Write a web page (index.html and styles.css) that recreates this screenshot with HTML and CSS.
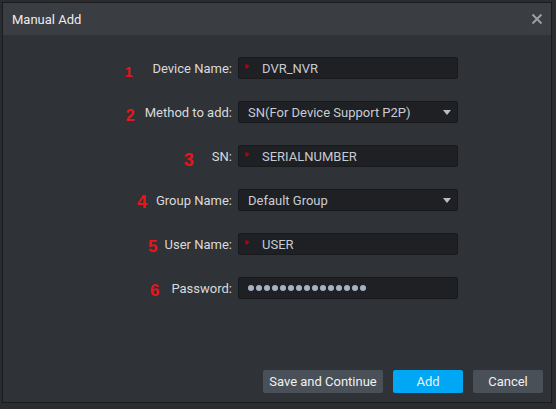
FILE: index.html
```html
<!DOCTYPE html>
<html>
<head>
<meta charset="utf-8">
<link rel="stylesheet" href="styles.css">
</head>
<body>
<div class="dialog">
  <div class="titlebar">
    <span class="title">Manual Add</span>
    <svg class="close" width="12" height="12" viewBox="0 0 12 12"><path d="M1.5 1.5L10.5 10.5M10.5 1.5L1.5 10.5" stroke="#9a9ea6" stroke-width="2"/></svg>
  </div>
  <div class="content">
    <div class="form">
      <div class="row">
        <div class="label"><span class="num n1">1</span><span>Device Name:</span></div>
        <div class="field"><span class="req">*</span><span class="val">DVR_NVR</span></div>
      </div>
      <div class="row">
        <div class="label"><span class="num n2">2</span><span>Method to add:</span></div>
        <div class="field select"><span class="sval">SN(For Device Support P2P)</span><span class="caret"></span></div>
      </div>
      <div class="row">
        <div class="label"><span class="num n3">3</span><span>SN:</span></div>
        <div class="field"><span class="req">*</span><span class="val">SERIALNUMBER</span></div>
      </div>
      <div class="row">
        <div class="label"><span class="num n4">4</span><span>Group Name:</span></div>
        <div class="field select"><span class="sval">Default Group</span><span class="caret"></span></div>
      </div>
      <div class="row">
        <div class="label"><span class="num n5">5</span><span>User Name:</span></div>
        <div class="field"><span class="req">*</span><span class="val">USER</span></div>
      </div>
      <div class="row">
        <div class="label"><span class="num n6">6</span><span>Password:</span></div>
        <div class="field pass">
          <span class="dot"></span><span class="dot"></span><span class="dot"></span><span class="dot"></span><span class="dot"></span><span class="dot"></span><span class="dot"></span><span class="dot"></span><span class="dot"></span><span class="dot"></span><span class="dot"></span><span class="dot"></span><span class="dot"></span><span class="dot"></span><span class="dot"></span>
        </div>
      </div>
    </div>
    <div class="buttons">
      <button class="btn save">Save and Continue</button>
      <button class="btn add">Add</button>
      <button class="btn cancel">Cancel</button>
    </div>
  </div>
</div>
</body>
</html>
```
FILE: styles.css
```css
html, body {
  margin: 0;
  padding: 0;
}
body {
  width: 556px;
  height: 409px;
  background: #2a2c30;
  font-family: Roboto, "Liberation Sans", Arial, sans-serif;
  overflow: hidden;
}
.dialog {
  box-sizing: border-box;
  margin: 2px 0 0 2px;
  width: 550px;
  height: 401px;
  border: 1px solid #1a1b1e;
  background: #2f3237;
  display: flex;
  flex-direction: column;
}
.titlebar {
  height: 32px;
  flex: none;
  background: #3a3d42;
  display: flex;
  align-items: center;
  justify-content: space-between;
  padding: 0 8px 0 9px;
}
.title {
  color: #ececec;
  font-size: 13px;
}
.close {
  display: block;
}
.content {
  flex: 1;
  display: flex;
  flex-direction: column;
  padding: 22px 8px 9px 0;
}
.form {
  display: flex;
  flex-direction: column;
  gap: 22px;
}
.row {
  display: flex;
  height: 22px;
  gap: 6px;
}
.label {
  width: 229px;
  display: flex;
  justify-content: flex-end;
  align-items: center;
  color: #dadada;
  font-size: 13px;
}
.num {
  color: #e8151b;
  font-family: "Liberation Sans", Arial, sans-serif;
  font-weight: bold;
  line-height: 1;
}
.n1 { font-size: 14px; margin-right: 20px; margin-top: 7px; }
.n2 { font-size: 16px; margin-right: 10px; margin-top: 8px; }
.n3 { font-size: 18px; margin-right: 18px; margin-top: 7px; }
.n4 { font-size: 18px; margin-right: 9px; margin-top: 4px; }
.n5 { font-size: 17px; margin-right: 7px; margin-top: 5px; }
.n6 { font-size: 17px; margin-right: 12px; margin-top: 5px; }
.field {
  box-sizing: border-box;
  width: 220px;
  height: 22px;
  background: #1e2024;
  border: 1px solid #191a1d;
  border-radius: 2px;
  display: flex;
  align-items: center;
  padding-left: 5px;
  color: #c6cbd3;
  font-size: 13px;
}
.req {
  color: #d00000;
  font-size: 11px;
  align-self: flex-start;
  margin-top: 4px;
  width: 18px;
}
.select {
  padding-left: 9px;
  padding-right: 6px;
  justify-content: space-between;
}
.sval {
  color: #c8ccd3;
}
.caret {
  width: 0;
  height: 0;
  border-left: 4px solid transparent;
  border-right: 4px solid transparent;
  border-top: 5px solid #b9bdc5;
}
.pass {
  padding-left: 9px;
  gap: 2px;
}
.dot {
  width: 6px;
  height: 6px;
  border-radius: 50%;
  background: #a7b2c4;
}
.buttons {
  margin-top: auto;
  display: flex;
  justify-content: flex-end;
  gap: 10px;
}
.btn {
  height: 23px;
  border: none;
  border-radius: 2px;
  padding: 0;
  font-family: Roboto, "Liberation Sans", Arial, sans-serif;
  font-size: 13px;
  color: #eef0f2;
}
.save { width: 120px; background: #4a5058; }
.add { width: 70px; background: #00a7f4; }
.cancel { width: 70px; background: #4a5058; }
```
